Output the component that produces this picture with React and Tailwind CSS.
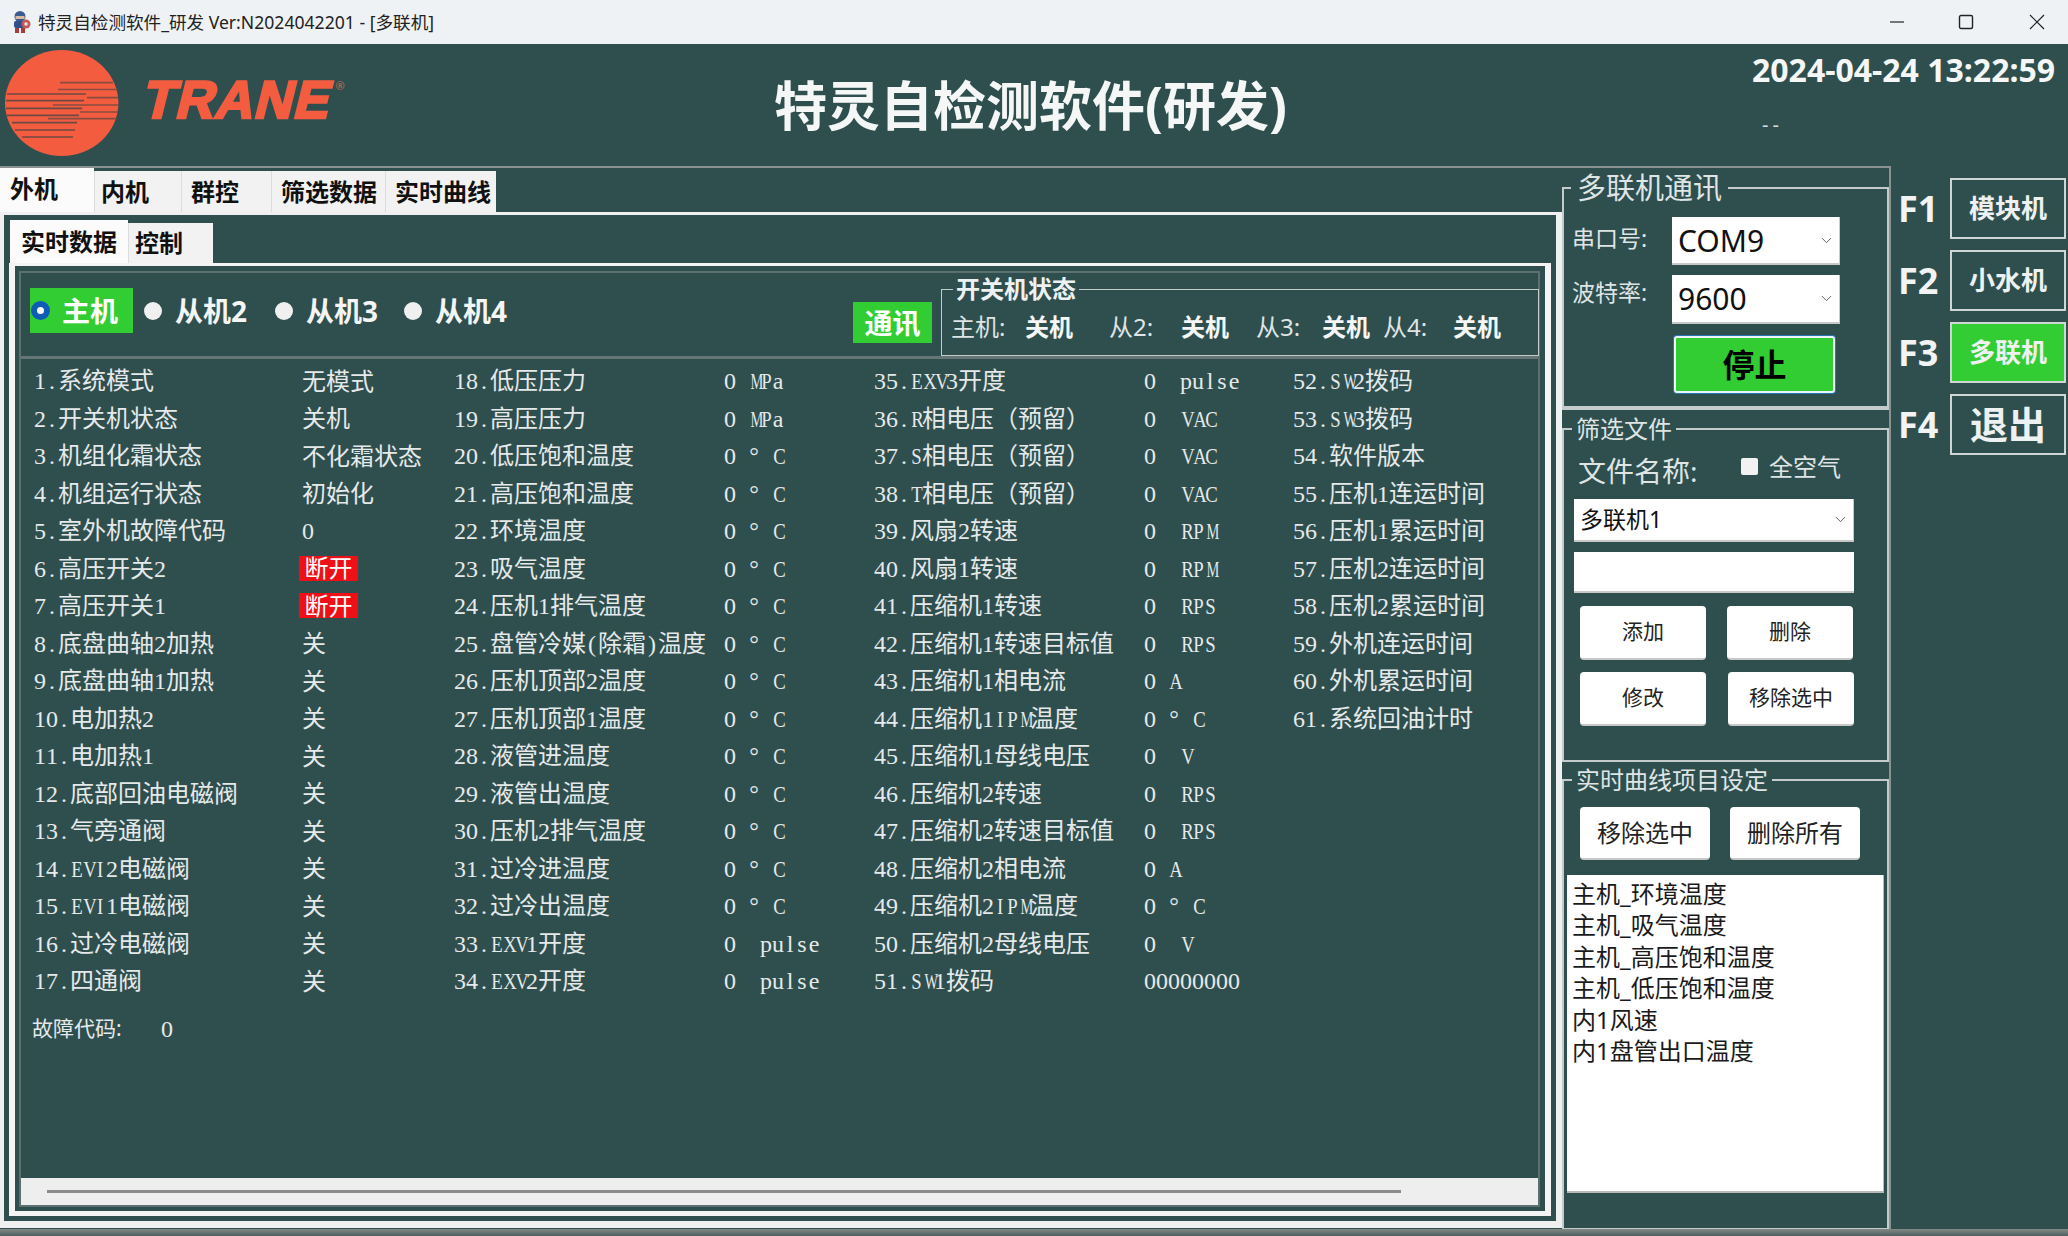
import { ChevronDown } from "lucide-react";

const col1 = [
  ["1.系统模式", "无模式"], ["2.开关机状态", "关机"], ["3.机组化霜状态", "不化霜状态"], ["4.机组运行状态", "初始化"],
  ["5.室外机故障代码", "0"], ["6.高压开关2", "断开", true], ["7.高压开关1", "断开", true], ["8.底盘曲轴2加热", "关"],
  ["9.底盘曲轴1加热", "关"], ["10.电加热2", "关"], ["11.电加热1", "关"], ["12.底部回油电磁阀", "关"],
  ["13.气旁通阀", "关"], ["14.EVI2电磁阀", "关"], ["15.EVI1电磁阀", "关"], ["16.过冷电磁阀", "关"], ["17.四通阀", "关"],
];
const col2 = [
  ["18.低压压力", "0 MPa"], ["19.高压压力", "0 MPa"], ["20.低压饱和温度", "0 ° C"], ["21.高压饱和温度", "0 ° C"],
  ["22.环境温度", "0 ° C"], ["23.吸气温度", "0 ° C"], ["24.压机1排气温度", "0 ° C"], ["25.盘管冷媒(除霜)温度", "0 ° C"],
  ["26.压机顶部2温度", "0 ° C"], ["27.压机顶部1温度", "0 ° C"], ["28.液管进温度", "0 ° C"], ["29.液管出温度", "0 ° C"],
  ["30.压机2排气温度", "0 ° C"], ["31.过冷进温度", "0 ° C"], ["32.过冷出温度", "0 ° C"], ["33.EXV1开度", "0  pulse"], ["34.EXV2开度", "0  pulse"],
];
const col3 = [
  ["35.EXV3开度", "0  pulse"], ["36.R相电压（预留）", "0  VAC"], ["37.S相电压（预留）", "0  VAC"], ["38.T相电压（预留）", "0  VAC"],
  ["39.风扇2转速", "0  RPM"], ["40.风扇1转速", "0  RPM"], ["41.压缩机1转速", "0  RPS"], ["42.压缩机1转速目标值", "0  RPS"],
  ["43.压缩机1相电流", "0 A"], ["44.压缩机1IPM温度", "0 ° C"], ["45.压缩机1母线电压", "0  V"], ["46.压缩机2转速", "0  RPS"],
  ["47.压缩机2转速目标值", "0  RPS"], ["48.压缩机2相电流", "0 A"], ["49.压缩机2IPM温度", "0 ° C"], ["50.压缩机2母线电压", "0  V"], ["51.SW1拨码", "00000000"],
];
const col4 = [
  ["52.SW2拨码"], ["53.SW3拨码"], ["54.软件版本"], ["55.压机1连运时间"], ["56.压机1累运时间"],
  ["57.压机2连运时间"], ["58.压机2累运时间"], ["59.外机连运时间"], ["60.外机累运时间"], ["61.系统回油计时"],
];

const squeeze = (ch) => {
  if (/[MW]/.test(ch)) return "scale-x-[0.6]";
  if (/[A-Z]/.test(ch)) return "scale-x-[0.78]";
  return "";
};

// the original is a half-width bitmap font, so every latin glyph gets a 12px cell
const Mixed = ({ text }) =>
  text.split(/([\x00-\x7f°]+)/).map((part, i) =>
    i % 2
      ? [...part].map((ch, j) => (
          <span
            key={i + "-" + j}
            className={"inline-block w-[12px] whitespace-pre text-center font-['Liberation_Serif',serif] " + squeeze(ch)}
          >
            {ch}
          </span>
        ))
      : part
  );

const DataRow = ({ row, first }) => (
  <div className="flex h-[37.5px] items-center text-[24px] leading-none text-[#e6e9e9]">
    <div className={(first ? "w-[268px]" : "w-[270px]") + " whitespace-nowrap"}><Mixed text={row[0]} /></div>
    {row[2] ? (
      <div className="ml-[-3px] flex h-[25px] w-[59px] items-center justify-center bg-[#ee0f17] text-white">{row[1]}</div>
    ) : (
      row[1] && <div className="whitespace-pre"><Mixed text={row[1]} /></div>
    )}
  </div>
);

const TopTab = ({ label, w, active, pad = "pl-[9px]" }) => (
  <div
    className={
      (active
        ? "flex h-[44px] items-center bg-[#fbfbfb] pb-[3px] text-[24px] font-bold text-[#111] "
        : "flex h-[41px] items-center border-l border-[#dcdcdc] bg-[#f2f2f2] text-[24px] font-bold text-[#111] ") + pad
    }
    style={{ width: w }}
  >
    {label}
  </div>
);

const Radio = ({ label, on }) =>
  on ? (
    <div className="flex h-[45px] w-[103px] items-center bg-[#32cd32] pl-[1px] text-[28px] font-bold text-white">
      <div className="h-[19px] w-[19px] rounded-full border-[6px] border-[#0f5cb8] bg-white" />
      <span className="ml-[12px]">{label}</span>
    </div>
  ) : (
    <div className="flex h-[45px] items-center text-[28px] font-bold text-[#f4f6f6]">
      <div className="h-[18px] w-[18px] rounded-full bg-[#f0f0f0]" />
      <span className="ml-[13px] whitespace-nowrap">{label}</span>
    </div>
  );

const FakeSelect = ({ value, className }) => (
  <div className={"flex items-center justify-between border-b-2 border-r border-[#c8c8c8] bg-white pl-[6px] pr-[4px] text-[#111] " + className}>
    <span>{value}</span>
    <ChevronDown size={17} strokeWidth={1.3} className="text-[#555]" />
  </div>
);

const WhiteBtn = ({ label, className }) => (
  <div className={"flex items-center justify-center rounded-[4px] border-b-2 border-[#c8c8c8] bg-white text-[#222] " + className}>{label}</div>
);

const Group = ({ title, legend, className, children }) => (
  <fieldset className={"min-w-0 border-2 border-[#c3cbcb] " + className}>
    <legend className={"text-[#dfe4e4] " + legend}>{title}</legend>
    {children}
  </fieldset>
);

const FKey = ({ k, label, text, green }) => (
  <div className="flex h-[61px] items-center">
    <div className="w-[52px] text-[36px] font-bold text-[#f2f4f4]">{k}</div>
    <div
      className={
        (green ? "bg-[#32cd32] " : "") +
        "flex h-[61px] w-[116px] items-center justify-center border-2 border-[#cfd6d6] font-bold text-[#eef1f1] " +
        text
      }
    >
      {label}
    </div>
  </div>
);

export default function App() {
  return (
    <div className="flex h-[1236px] w-[2068px] flex-col overflow-hidden bg-[#2f4f4f] font-['Noto_Sans','Noto_Sans_CJK_SC',sans-serif]">
      {/* title bar */}
      <div className="flex h-[44px] items-center bg-[#eff2f5] pl-[11px] text-[#222]">
        <svg width="20" height="22" viewBox="0 0 20 22">
          <circle cx="9" cy="5.5" r="5.5" fill="#3c5a92" />
          <rect x="4.5" y="5" width="9" height="3" fill="#d9b9a0" />
          <rect x="3" y="10" width="11" height="7" rx="2" fill="#2f4f8c" />
          <circle cx="15" cy="13" r="4.5" fill="#c45a55" />
          <circle cx="15" cy="13" r="1.7" fill="#e8e8ee" />
          <rect x="4" y="17" width="4" height="5" fill="#a83a3a" />
          <rect x="10" y="17" width="4" height="5" fill="#a83a3a" />
        </svg>
        <span className="ml-[7px] text-[17.6px] whitespace-nowrap">特灵自检测软件_研发 Ver:N2024042201 - [多联机]</span>
        <div className="ml-auto flex items-center">
          <svg width="16" height="16" viewBox="0 0 16 16" className="mr-[53px]"><path d="M1 8h14" stroke="#222" strokeWidth="1.2" /></svg>
          <svg width="16" height="16" viewBox="0 0 16 16" className="mr-[55px]"><rect x="1.5" y="1.5" width="13" height="13" rx="1.5" fill="none" stroke="#222" strokeWidth="1.4" /></svg>
          <svg width="16" height="16" viewBox="0 0 16 16" className="mr-[23px]"><path d="M1 1l14 14M15 1L1 15" stroke="#222" strokeWidth="1.2" /></svg>
        </div>
      </div>

      {/* logo, heading, clock */}
      <div className="flex h-[122px]">
        <div className="flex w-[774px] items-start">
          <svg width="130" height="114" viewBox="0 0 130 114" className="mt-[2px]">
            <ellipse cx="61.7" cy="57" rx="56.7" ry="53" fill="#f45c40" />
            <g stroke="#6e4a40" strokeWidth="1.7">
              <path d="M60 36.7h53M58 43.5h58M87 51.7h31M53 59h66M80 66h38M48 72.7h69" opacity="0.8" />
              <path d="M7 48h79M6 54.7h78M6 62.3h76M7 69.3h72M12 76.7h65M15 84h60M22 91h51" />
            </g>
          </svg>
          <div className="ml-[15px] mt-[26px] flex items-start">
            <span className="inline-block skew-x-[-14deg] font-['Liberation_Sans',sans-serif] text-[53px] leading-[60px] font-bold tracking-[1px] text-[#f45c40] [-webkit-text-stroke:2.5px_#f45c40]">
              TRANE
            </span>
            <span className="ml-[3px] mt-[10px] text-[11px] leading-none text-[#c9694f]">®</span>
          </div>
        </div>
        <div className="w-[512px] pt-[28px] text-[53px] leading-[68px] font-bold whitespace-nowrap text-[#f5f7f7]">特灵自检测软件(研发)</div>
        <div className="pl-[466px] pt-[5px] text-[#f5f7f7]">
          <div className="text-[32px] leading-[42px] font-bold whitespace-nowrap">2024-04-24 13:22:59</div>
          <div className="mt-[20px] pl-[10px] text-[20px] leading-[28px] tracking-[4px] text-[#d5dada]">--</div>
        </div>
      </div>

      <div className="flex h-[1063px]">
        <div className="flex h-full w-[1891px] border-t-2 border-r-2 border-[#8b9292]">
          {/* left tab widget */}
          <div className="flex w-[1562px] flex-col">
            <div className="flex h-[44px] items-end">
              <TopTab label="外机" w={94} active pad="pl-[10px]" />
              <TopTab label="内机" w={87} pad="pl-[6px]" />
              <TopTab label="群控" w={90} />
              <TopTab label="筛选数据" w={114} />
              <TopTab label="实时曲线" w={111} />
            </div>
            <div className="flex h-[1016px] flex-col border-t-[3px] border-r-[6px] border-b-[7px] border-l-4 border-[#f0f0f0] pt-[5px] pr-[5px] pb-[5px] pl-[5px]">
              <div className="flex h-[43px] items-end pl-px">
                <div className="flex h-[43px] w-[118px] items-center bg-[#fbfbfb] pl-[11px] text-[24px] font-bold text-[#111]">实时数据</div>
                <div className="flex h-[40px] w-[85px] items-center border-l border-[#dcdcdc] bg-[#f2f2f2] pl-[6px] text-[24px] font-bold text-[#111]">控制</div>
              </div>
              <div className="flex min-h-0 flex-1 flex-col border-t-[3px] border-r-[6px] border-b-[5px] border-l-[6px] border-[#f4f4f4] pt-[5px] pr-[5px] pb-[4px] pl-[4px]">
                <div className="flex min-h-0 flex-1 flex-col border-2 border-[#5d7070]">
                  {/* radios + on/off state */}
                  <div className="flex h-[86px] shrink-0 border-b-[3px] border-[#667676]">
                    <div className="ml-[9px] mt-[15px] flex gap-[26px]">
                      <Radio label="主机" on />
                      <div className="ml-[-15px]"><Radio label="从机2" /></div>
                      <div className="ml-[2px]"><Radio label="从机3" /></div>
                      <Radio label="从机4" />
                    </div>
                    <div className="ml-auto mr-[-1px] flex items-start">
                      <div className="mt-[29px] flex h-[41px] w-[79px] items-center justify-center bg-[#32cd32] text-[28px] font-bold text-white">通讯</div>
                      <fieldset className="ml-[9px] mt-[4px] h-[79px] w-[598px] border border-[#c3cbcb]">
                        <legend className="ml-[11px] px-[3px] text-[24px] leading-[24px] font-bold text-[#eef1f1]">开关机状态</legend>
                        <div className="flex pl-[9px] pt-[10px] text-[24px] leading-[32px] text-[#dfe4e4]">
                          <span className="w-[74px]">主机:</span>
                          <b className="w-[84px] text-[#f5f7f7]">关机</b>
                          <span className="w-[72px]">从2:</span>
                          <b className="w-[75px] text-[#f5f7f7]">关机</b>
                          <span className="w-[66px]">从3:</span>
                          <b className="w-[61px] text-[#f5f7f7]">关机</b>
                          <span className="w-[70px]">从4:</span>
                          <b className="text-[#f5f7f7]">关机</b>
                        </div>
                      </fieldset>
                    </div>
                  </div>

                  {/* data table */}
                  <div className="grid shrink-0 grid-cols-[420px_420px_419px_auto] pl-[13px] pt-[3px]">
                    {[col1, col2, col3, col4].map((col, i) => (
                      <div key={i}>
                        {col.map((row) => (
                          <DataRow key={row[0]} row={row} first={i === 0} />
                        ))}
                      </div>
                    ))}
                  </div>
                  <div className="mt-[9px] flex h-[40px] shrink-0 items-center pl-[11px] text-[#e6e9e9]">
                    <span className="w-[129px] text-[21px]">故障代码:</span>
                    <span className="font-['Liberation_Serif',serif] text-[24px]">0</span>
                  </div>

                  {/* horizontal scroller */}
                  <div className="mt-auto flex h-[27px] shrink-0 items-center bg-[#eeeeee] pl-[26px] pr-[137px]">
                    <div className="h-[3px] w-full bg-[#8b8b8b]" />
                  </div>
                </div>
              </div>
            </div>
          </div>

          {/* right settings column */}
          <div className="flex min-w-0 flex-1 flex-col">
            <div className="h-[240px] pt-[3px]">
              <Group title="多联机通讯" legend="ml-[7px] px-[6px] text-[29px] leading-[34px]" className="h-[237px]">
                <div className="flex items-start pl-[8px] pt-[12px]">
                  <span className="w-[100px] text-[23px] leading-[42px] text-[#dfe4e4]">串口号:</span>
                  <FakeSelect value="COM9" className="h-[48px] w-[168px] text-[30px]" />
                </div>
                <div className="mt-[10px] flex items-start pl-[8px]">
                  <span className="w-[100px] text-[23px] leading-[34px] text-[#dfe4e4]">波特率:</span>
                  <FakeSelect value="9600" className="h-[49px] w-[168px] text-[30px]" />
                </div>
                <div className="ml-[110px] mt-[12px] flex h-[57px] w-[161px] items-center justify-center rounded-[3px] border-2 border-[#eaf5fc] bg-[#32cd32] text-[32px] font-bold text-black ring-1 ring-[#2a77b5]">停止</div>
              </Group>
            </div>
            <div className="h-[352px] border-t-2 border-[#c3cbcb] pt-[3px]">
              <Group title="筛选文件" legend="ml-[8px] px-[4px] text-[24px] leading-[32px]" className="h-[349px]">
                <div className="flex items-start pl-[14px] pt-[8px]">
                  <span className="w-[163px] text-[28px] leading-[36px] text-[#dfe4e4]">文件名称:</span>
                  <div className="mt-[5px] h-[17px] w-[17px] rounded-[2px] bg-[#f2f2f2]" />
                  <span className="ml-[11px] text-[24px] leading-[28px] text-[#dfe4e4]">全空气</span>
                </div>
                <FakeSelect value="多联机1" className="ml-[10px] mt-[10px] h-[43px] w-[280px] text-[23px]" />
                <div className="ml-[10px] mt-[10px] h-[41px] w-[280px] border-b-2 border-[#c8c8c8] bg-white" />
                <div className="ml-[16px] mt-[13px] flex gap-[21px]">
                  <WhiteBtn label="添加" className="h-[54px] w-[126px] text-[21px]" />
                  <WhiteBtn label="删除" className="h-[54px] w-[126px] text-[21px]" />
                </div>
                <div className="ml-[16px] mt-[12px] flex gap-[22px]">
                  <WhiteBtn label="修改" className="h-[54px] w-[126px] text-[21px]" />
                  <WhiteBtn label="移除选中" className="h-[54px] w-[126px] text-[21px]" />
                </div>
              </Group>
            </div>
            <div className="flex-1 border-t-2 border-[#c3cbcb] pt-[2px] pb-[1px]">
              <Group title="实时曲线项目设定" legend="ml-[8px] px-[4px] text-[24px] leading-[32px]" className="h-[466px]">
                <div className="ml-[16px] mt-[11px] flex gap-[20px]">
                  <WhiteBtn label="移除选中" className="h-[53px] w-[130px] text-[24px]" />
                  <WhiteBtn label="删除所有" className="h-[53px] w-[130px] text-[24px]" />
                </div>
                <div className="ml-[3px] mt-[15px] h-[318px] w-[317px] border-b-2 border-r border-[#b9b9b9] bg-white pl-[5px] pt-[3px] text-[24px] leading-[31.4px] text-[#1a1a1a]">
                  <div>主机_环境温度</div>
                  <div>主机_吸气温度</div>
                  <div>主机_高压饱和温度</div>
                  <div>主机_低压饱和温度</div>
                  <div>内1风速</div>
                  <div>内1盘管出口温度</div>
                </div>
              </Group>
            </div>
          </div>
        </div>

        {/* function keys */}
        <div className="flex flex-col gap-[11px] pl-[7px] pt-[12px]">
          <FKey k="F1" label="模块机" text="text-[26px]" />
          <FKey k="F2" label="小水机" text="text-[26px]" />
          <FKey k="F3" label="多联机" text="text-[26px]" green />
          <FKey k="F4" label="退出" text="text-[38px]" />
        </div>
      </div>

      <div className="h-[7px] bg-gradient-to-b from-[#848a86] to-[#4e5f5d]" />
    </div>
  );
}
